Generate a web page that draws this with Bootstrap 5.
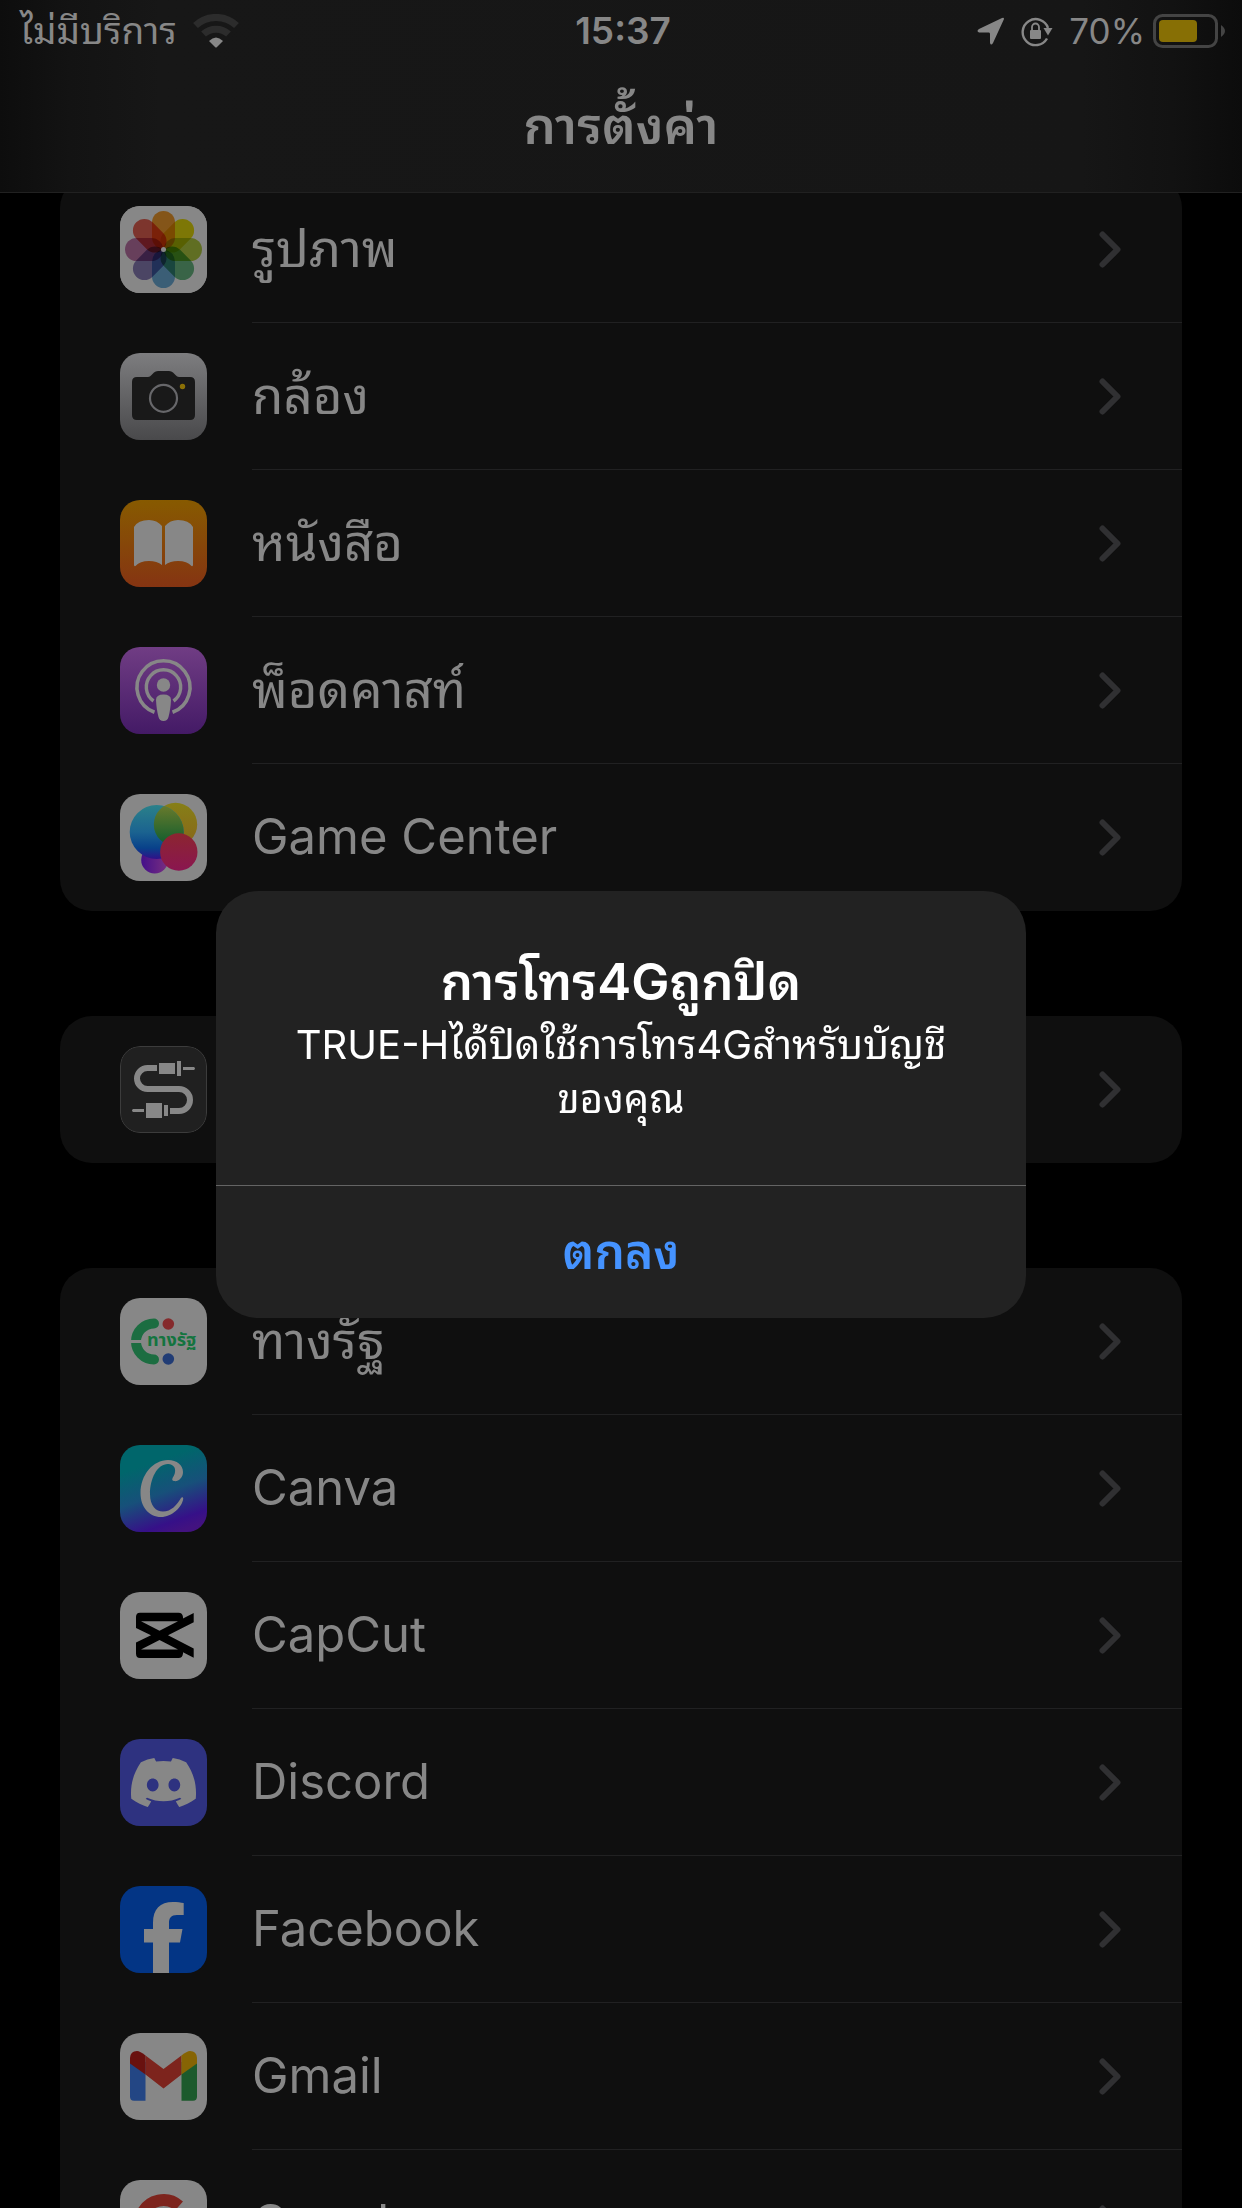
<!DOCTYPE html>
<html lang="th" data-bs-theme="dark">
<head>
<meta charset="utf-8">
<meta name="viewport" content="width=device-width, initial-scale=1">
<title>การตั้งค่า</title>
<link href="https://cdn.jsdelivr.net/npm/bootstrap@5.3.0/dist/css/bootstrap.min.css" rel="stylesheet">
<style>
  body { background: #000; color: #878787; font-family: Inter, "Noto Sans Thai Looped", "Loma", "Noto Sans Thai", "Noto Sans", sans-serif; }
  .top-bar { height: 193px; color: #878787; border-bottom: 1px solid #212121;
    background: linear-gradient(90deg, #0d0d0d 0, #131313 70px, #171717 160px, #161616 calc(100% - 160px), #121212 calc(100% - 70px), #0c0c0c 100%); }
  .status-line { height: 62px; padding: 0 16px 0 20px; font-size: 35px; line-height: 62px; }
  .status-side { flex: 1 1 0; }
  .carrier { font-size: 37px; }
  .clock { font-size: 37px; }
  .page-title { font-size: 51px; line-height: 72px; font-weight: 600; padding-top: 28px; color: #878787; }
  .settings-list { padding: 176px 60px 0; }
  .settings-group { background: #0f0f0f; border-radius: 32px; margin-bottom: 105px; overflow: hidden; }
  .settings-row { height: 147px; padding-left: 60px; color: #878787; text-decoration: none; }
  .app-icon { width: 87px; height: 87px; flex: none; border-radius: 20px; }
  .app-icon text { font-family: "Noto Sans Thai", "Noto Sans", sans-serif; }
  .petals { isolation: isolate; }
  .petals rect { mix-blend-mode: multiply; }
  .row-body { margin-left: 45px; padding-right: 61px; border-bottom: 1px solid #212122; font-size: 49px; line-height: 74px; }
  .row-body :lang(th) { font-size: 51px; }
  .settings-row:last-child .row-body { border-bottom-color: transparent; }
  .chevron { width: 22px; height: 37px; flex: none; }
  .alert-dialog { max-width: 810px; }
  .alert-dialog .modal-content { background: #222; border: 0; border-radius: 42px; overflow: hidden; }
  .alert-text { height: 294px; padding: 55px 60px 0; color: #fff; }
  .alert-title { font-size: 51px; line-height: 72px; font-weight: 600; margin: 0; }
  .alert-message { font-size: 40px; line-height: 54px; margin: 0; }
  .alert-ok { height: 133px; border: 0; border-top: 1px solid #646464; background: transparent; color: #4593ff; font-size: 48px; line-height: 72px; font-weight: 600; }
</style>
<script src="https://cdn.jsdelivr.net/npm/bootstrap@5.3.0/dist/js/bootstrap.bundle.min.js"></script>
</head>
<body class="vh-100 overflow-hidden">

<svg class="d-none" aria-hidden="true">
  <symbol id="chevron" viewBox="0 0 22 37"><path d="M3.500 3.500L18.500 18.500L3.500 33.500" fill="none" stroke="#303032" stroke-width="6" stroke-linecap="round" stroke-linejoin="round"/></symbol>
</svg>

<header class="top-bar fixed-top">
  <div class="status-line d-flex align-items-center">
    <div class="status-side d-flex align-items-center">
      <span class="carrier">ไม่มีบริการ</span>
      <svg class="ms-3" width="46" height="34" viewBox="0 0 46 34" aria-label="Wi-Fi">
        <g fill="none" stroke="#2c2c2c" stroke-width="7"><path d="M2.500 11.500A30 30 0 0 1 43.500 11.500"/><path d="M10.500 20A18.500 18.500 0 0 1 35.500 20"/></g>
        <path d="M16 27Q23 20 30 27L24 33Q23 34 22 33Z" fill="#878787"/>
      </svg>
    </div>
    <div class="clock fw-semibold">15:37</div>
    <div class="status-side d-flex align-items-center justify-content-end">
      <svg width="28" height="28" viewBox="0 0 28 28"><path d="M27 2Q27 0 25 1L2 12Q-1 14 2 15.500H12Q13 15.500 13 17V26Q14 29 16 26Z" fill="#878787"/></svg>
      <svg class="ms-3" width="32" height="32" viewBox="0 0 32 32">
        <path d="M26 23.500A13 13 0 1 1 27 13" fill="none" stroke="#878787" stroke-width="2.400"/>
        <path d="M22.500 13H31.500L27 20.500Z" fill="#878787"/><rect x="9" y="15" width="11" height="9" rx="1" fill="#878787"/>
        <path d="M11 15V12A3.500 3.500 0 0 1 18 12V15" fill="none" stroke="#878787" stroke-width="1.800"/>
      </svg>
      <span class="ms-3">70%</span>
      <svg class="ms-2" width="73" height="34" viewBox="0 0 73 34">
        <rect x="1.500" y="1.500" width="62" height="31" rx="8" fill="none" stroke="#444" stroke-width="3"/>
        <rect x="6" y="6" width="38" height="22" rx="4" fill="#876f05"/>
        <path d="M68 11Q76 17 68 23Z" fill="#444"/>
      </svg>
    </div>
  </div>
  <h1 class="page-title text-center m-0">การตั้งค่า</h1>
</header>

<main class="settings-list" lang="en">
  <nav class="settings-group">
    <a href="#" class="settings-row d-flex align-items-center">
      <svg class="app-icon" viewBox="0 0 87 87">
        <g class="petals">
          <path d="M0 0H87V87H0Z" fill="#fff"/>
          <rect x="32" y="5" width="23" height="38" rx="11.500" fill="#f9a030"/>
          <rect x="32" y="5" width="23" height="38" rx="11.500" fill="#ece00d" transform="rotate(45 43.500 43.500)"/>
          <rect x="32" y="5" width="23" height="38" rx="11.500" fill="#b5d043" transform="rotate(90 43.500 43.500)"/>
          <rect x="32" y="5" width="23" height="38" rx="11.500" fill="#6cbd86" transform="rotate(135 43.500 43.500)"/>
          <rect x="32" y="5" width="23" height="38" rx="11.500" fill="#70b2df" transform="rotate(180 43.500 43.500)"/>
          <rect x="32" y="5" width="23" height="38" rx="11.500" fill="#8f83be" transform="rotate(225 43.500 43.500)"/>
          <rect x="32" y="5" width="23" height="38" rx="11.500" fill="#c277ad" transform="rotate(270 43.500 43.500)"/>
          <rect x="32" y="5" width="23" height="38" rx="11.500" fill="#ec6456" transform="rotate(315 43.500 43.500)"/>
        </g>
        <circle cx="43.500" cy="43.500" r="2.500" fill="#fff"/>
        <rect width="87" height="87" fill="#000" fill-opacity=".47"/>
      </svg>
      <span class="row-body d-flex flex-fill h-100 align-items-center justify-content-between"><span lang="th">รูปภาพ</span><svg class="chevron"><use href="#chevron"/></svg></span>
    </a>
    <a href="#" class="settings-row d-flex align-items-center">
      <svg class="app-icon" viewBox="0 0 87 87">
        <defs><linearGradient id="gCam" x2="0" y2="1"><stop stop-color="#7d7d7f"/><stop offset="1" stop-color="#49494b"/></linearGradient></defs>
        <rect width="87" height="87" fill="url(#gCam)"/>
        <path d="M17 24H28Q30 24 31.500 22L34 19.500Q35.500 18 38 18H49Q51.500 18 53 19.500L55.500 22Q57 24 59 24H70Q75 24 75 29V62Q75 67 70 67H17Q12 67 12 62V29Q12 24 17 24Z" fill="#191919"/>
        <circle cx="43.500" cy="45.300" r="13.500" fill="none" stroke="#67676a" stroke-width="2.200"/><circle cx="62.500" cy="33.500" r="2.700" fill="#8a6f06"/>
      </svg>
      <span class="row-body d-flex flex-fill h-100 align-items-center justify-content-between"><span lang="th">กล้อง</span><svg class="chevron"><use href="#chevron"/></svg></span>
    </a>
    <a href="#" class="settings-row d-flex align-items-center">
      <svg class="app-icon" viewBox="0 0 87 87">
        <defs><linearGradient id="gBook" x2="0" y2="1"><stop stop-color="#875a00"/><stop offset="1" stop-color="#853412"/></linearGradient></defs>
        <rect width="87" height="87" fill="url(#gBook)"/>
        <path d="M14 27Q18 20 29 20Q37 20 42 26V65Q37 61 29 61Q20 61 15.500 66Q14 66.500 14 65Z" fill="#878787"/>
        <path d="M73 27Q69 20 58 20Q50 20 45 26V65Q50 61 58 61Q67 61 71.500 66Q73 66.500 73 65Z" fill="#878787"/>
      </svg>
      <span class="row-body d-flex flex-fill h-100 align-items-center justify-content-between"><span lang="th">หนังสือ</span><svg class="chevron"><use href="#chevron"/></svg></span>
    </a>
    <a href="#" class="settings-row d-flex align-items-center">
      <svg class="app-icon" viewBox="0 0 87 87">
        <defs><linearGradient id="gPod" x2="0" y2="1"><stop stop-color="#703d84"/><stop offset="1" stop-color="#441a66"/></linearGradient></defs>
        <rect width="87" height="87" fill="url(#gPod)"/>
        <g fill="none" stroke="#878787"><path d="M34.500 65.200A26.500 26.500 0 1 1 52.500 65.200" stroke-width="3.600"/><path d="M33.500 54A17.200 17.200 0 1 1 53.500 54" stroke-width="3.400"/></g>
        <circle cx="43.500" cy="38" r="6.700" fill="#878787"/>
        <path d="M36 53Q36 47.500 43.500 47.500Q51 47.500 51 53Q50.500 63 48.500 70Q47.500 74 43.500 74Q39.500 74 38.500 70Q36.500 63 36 53Z" fill="#878787"/>
      </svg>
      <span class="row-body d-flex flex-fill h-100 align-items-center justify-content-between"><span lang="th">พ็อดคาสท์</span><svg class="chevron"><use href="#chevron"/></svg></span>
    </a>
    <a href="#" class="settings-row d-flex align-items-center">
      <svg class="app-icon" viewBox="0 0 87 87">
        <defs>
          <linearGradient id="gBlue" x2="0" y2="1"><stop stop-color="#2b818a"/><stop offset=".5" stop-color="#1b6390"/><stop offset=".8" stop-color="#08418a"/><stop offset="1" stop-color="#301089"/></linearGradient>
          <linearGradient id="gYel" x2="0" y2="1"><stop stop-color="#867f17"/><stop offset="1" stop-color="#88661a"/></linearGradient>
          <linearGradient id="gRed" x2="0" y2="1"><stop stop-color="#8c2530"/><stop offset="1" stop-color="#8a1650"/></linearGradient>
          <linearGradient id="gPur" x2="1" y2="0"><stop stop-color="#43108a"/><stop offset="1" stop-color="#7a2f80"/></linearGradient>
          <linearGradient id="gGrn" x2="0" y2="1"><stop stop-color="#6f7c2c"/><stop offset="1" stop-color="#0c5c2e"/></linearGradient>
          <clipPath id="cBlue"><circle cx="36.700" cy="38" r="27"/></clipPath>
        </defs>
        <rect width="87" height="87" fill="#878787"/>
        <circle cx="34.700" cy="66" r="13.500" fill="url(#gPur)"/><circle cx="55.500" cy="30.500" r="21.700" fill="url(#gYel)"/>
        <circle cx="36.700" cy="38" r="27" fill="url(#gBlue)"/>
        <circle cx="55.500" cy="30.500" r="21.700" fill="url(#gGrn)" clip-path="url(#cBlue)"/>
        <circle cx="58.800" cy="58" r="18.700" fill="url(#gRed)"/>
      </svg>
      <span class="row-body d-flex flex-fill h-100 align-items-center justify-content-between"><span>Game Center</span><svg class="chevron"><use href="#chevron"/></svg></span>
    </a>
  </nav>

  <nav class="settings-group">
    <a href="#" class="settings-row d-flex align-items-center">
      <svg class="app-icon" viewBox="0 0 87 87">
        <rect x=".5" y=".5" width="86" height="86" rx="19.500" fill="#202020" stroke="#3c3c3c"/>
        <path d="M37 22H27.500A10.500 10.500 0 0 0 27.500 43H59A11 11 0 0 1 59 65H50" fill="none" stroke="#878787" stroke-width="6"/>
        <path d="M39 17H55V28H39ZM57 15H61V30H57ZM63 21H74Q76 22.500 74 24H63ZM24 63H13Q11 64.500 13 66H24ZM26 57H42V72H26ZM44 59H48V70H44Z" fill="#878787"/>
      </svg>
      <span class="row-body d-flex flex-fill h-100 align-items-center justify-content-end"><svg class="chevron"><use href="#chevron"/></svg></span>
    </a>
  </nav>

  <nav class="settings-group">
    <a href="#" class="settings-row d-flex align-items-center">
      <svg class="app-icon" viewBox="0 0 87 87">
        <rect width="87" height="87" fill="#878787"/>
        <path d="M34 25.500A18 18 0 0 0 34 61.500" fill="none" stroke="#1c6d41" stroke-width="10" stroke-linecap="round"/>
        <path d="M11 42H23V45H11Z" fill="#878787"/>
        <circle cx="48.300" cy="26" r="5.800" fill="#852a2c"/><circle cx="48.300" cy="61" r="5.800" fill="#213c75"/>
        <text x="27" y="48" font-size="18" font-weight="700" fill="#14743f" stroke="#878787" stroke-width="3" paint-order="stroke">ทางรัฐ</text>
      </svg>
      <span class="row-body d-flex flex-fill h-100 align-items-center justify-content-between"><span lang="th">ทางรัฐ</span><svg class="chevron"><use href="#chevron"/></svg></span>
    </a>
    <a href="#" class="settings-row d-flex align-items-center">
      <svg class="app-icon" viewBox="0 0 87 87">
        <defs><linearGradient id="gCanva" x1=".3" y1="0" x2=".65" y2="1"><stop offset=".2" stop-color="#00666b"/><stop offset=".55" stop-color="#17507a"/><stop offset=".88" stop-color="#361088"/><stop offset="1" stop-color="#421280"/></linearGradient></defs>
        <rect width="87" height="87" fill="url(#gCanva)"/>
        <path d="M54 36C51 35.500 52.500 33 54 30.500C57 24 54 19 48 19C37 19 30 34 30 49C30 61 36 66.500 43 66.500C51 66.500 57 60 61 53C62 51.500 63.500 52 63.200 54C62 62 52 72 41 72C29 72 20.500 62 20.500 48C20.500 30 33 15 48 15C57 15 63 20 63 27C63 33 58 37 54 36Z" fill="#878787"/>
      </svg>
      <span class="row-body d-flex flex-fill h-100 align-items-center justify-content-between"><span>Canva</span><svg class="chevron"><use href="#chevron"/></svg></span>
    </a>
    <a href="#" class="settings-row d-flex align-items-center">
      <svg class="app-icon" viewBox="0 0 87 87">
        <rect width="87" height="87" fill="#878787"/>
        <path d="M20 20.700H58.500Q62.500 20.700 63 25L63 26.600L73.700 21V30.200L48 43.300L73.700 56.500V65.700L63 60.200V61.500Q62.500 66 58.500 66H20Q16 66 16 61.500V50.600L31 43.300L16 36V25Q16 20.700 20 20.700Z"/>
        <path d="M21 29.200H58L39.500 38.700ZM21 57.500H58L39.500 48Z" fill="#878787"/>
      </svg>
      <span class="row-body d-flex flex-fill h-100 align-items-center justify-content-between"><span>CapCut</span><svg class="chevron"><use href="#chevron"/></svg></span>
    </a>
    <a href="#" class="settings-row d-flex align-items-center">
      <svg class="app-icon" viewBox="0 0 87 87">
        <rect width="87" height="87" fill="#2e3280"/>
        <path transform="translate(11 11.500) scale(2.710 2.670)" fill="#878787" d="M20.317 4.3698a19.7913 19.7913 0 00-4.8851-1.5152.0741.0741 0 00-.0785.0371c-.211.3753-.4447.8648-.6083 1.2495-1.8447-.2762-3.68-.2762-5.4868 0-.1636-.3933-.4058-.8742-.6177-1.2495a.077.077 0 00-.0785-.037 19.7363 19.7363 0 00-4.8852 1.515.0699.0699 0 00-.0321.0277C.5334 9.0458-.319 13.5799.0992 18.0578a.0824.0824 0 00.0312.0561c2.0528 1.5076 4.0413 2.4228 5.9929 3.0294a.0777.0777 0 00.0842-.0276c.4616-.6304.8731-1.2952 1.226-1.9942a.076.076 0 00-.0416-.1057c-.6528-.2476-1.2743-.5495-1.8722-.8923a.077.077 0 01-.0076-.1277c.1258-.0943.2517-.1923.3718-.2914a.0743.0743 0 01.0776-.0105c3.9278 1.7933 8.18 1.7933 12.0614 0a.0739.0739 0 01.0785.0095c.1202.099.246.1981.3728.2924a.077.077 0 01-.0066.1276 12.2986 12.2986 0 01-1.873.8914.0766.0766 0 00-.0407.1067c.3604.698.7719 1.3628 1.225 1.9932a.076.076 0 00.0842.0286c1.961-.6067 3.9495-1.5219 6.0023-3.0294a.077.077 0 00.0313-.0552c.5004-5.177-.8382-9.6739-3.5485-13.6604a.061.061 0 00-.0312-.0286zM8.02 15.3312c-1.1825 0-2.1569-1.0857-2.1569-2.419 0-1.3332.9555-2.4189 2.157-2.4189 1.2108 0 2.1757 1.0952 2.1568 2.419 0 1.3332-.9555 2.4189-2.1569 2.4189zm7.9748 0c-1.1825 0-2.1569-1.0857-2.1569-2.419 0-1.3332.9554-2.4189 2.1569-2.4189 1.2108 0 2.1757 1.0952 2.1568 2.419 0 1.3332-.946 2.4189-2.1568 2.4189Z"/>
      </svg>
      <span class="row-body d-flex flex-fill h-100 align-items-center justify-content-between"><span>Discord</span><svg class="chevron"><use href="#chevron"/></svg></span>
    </a>
    <a href="#" class="settings-row d-flex align-items-center">
      <svg class="app-icon" viewBox="0 0 87 87">
        <rect width="87" height="87" fill="#033585"/>
        <path d="M33 87V56.500H24V43H33V37C33 23 40 16 53 16C57 16 61 16.500 63.700 17V29H57C51 29 49 32 49 37V43H62.500L60 56.500H49V87Z" fill="#878787"/>
      </svg>
      <span class="row-body d-flex flex-fill h-100 align-items-center justify-content-between"><span>Facebook</span><svg class="chevron"><use href="#chevron"/></svg></span>
    </a>
    <a href="#" class="settings-row d-flex align-items-center">
      <svg class="app-icon" viewBox="0 0 87 87">
        <rect width="87" height="87" fill="#878787"/>
        <path d="M10 29H25.500V67.700H14Q10 67.700 10 63.500Z" fill="#234684"/><path d="M77 29H61.500V67.700H73Q77 67.700 77 63.500Z" fill="#1c5a2c"/>
        <path d="M25.500 22.500L43.500 36L61.500 22.500V41.500L43.500 55.500L25.500 41.500Z" fill="#7d241d"/>
        <path d="M10 30.500V25Q10.500 18 17 18Q20 18 25.500 22.500V41.500Z" fill="#69110f"/><path d="M77 30.500V25Q76.500 18 70 18Q67 18 61.500 22.500V41.500Z" fill="#866404"/>
      </svg>
      <span class="row-body d-flex flex-fill h-100 align-items-center justify-content-between"><span>Gmail</span><svg class="chevron"><use href="#chevron"/></svg></span>
    </a>
    <a href="#" class="settings-row d-flex align-items-center">
      <svg class="app-icon" viewBox="0 0 87 87">
        <rect width="87" height="87" fill="#878787"/>
        <g fill="none" stroke-width="12"><path d="M59 26A23.500 23.500 0 0 0 22 34" stroke="#7d241d"/><path d="M22 34A23.500 23.500 0 0 0 22 53" stroke="#866404"/><path d="M22 53A23.500 23.500 0 0 0 59 61" stroke="#1c5a2c"/><path d="M59 61A23.500 23.500 0 0 0 67 44H44" stroke="#234684"/></g>
      </svg>
      <span class="row-body d-flex flex-fill h-100 align-items-center justify-content-between"><span>Google</span><svg class="chevron"><use href="#chevron"/></svg></span>
    </a>
  </nav>
</main>

<div class="modal d-block" role="dialog" aria-modal="true" aria-labelledby="alertTitle">
  <div class="modal-dialog modal-dialog-centered alert-dialog">
    <div class="modal-content">
      <div class="alert-text text-center">
        <h2 class="alert-title" id="alertTitle">การโทร4Gถูกปิด</h2>
        <p class="alert-message">TRUE-Hได้ปิดใช้การโทร4Gสำหรับบัญชี<br>ของคุณ</p>
      </div>
      <button type="button" class="alert-ok w-100">ตกลง</button>
    </div>
  </div>
</div>
</body>
</html>
